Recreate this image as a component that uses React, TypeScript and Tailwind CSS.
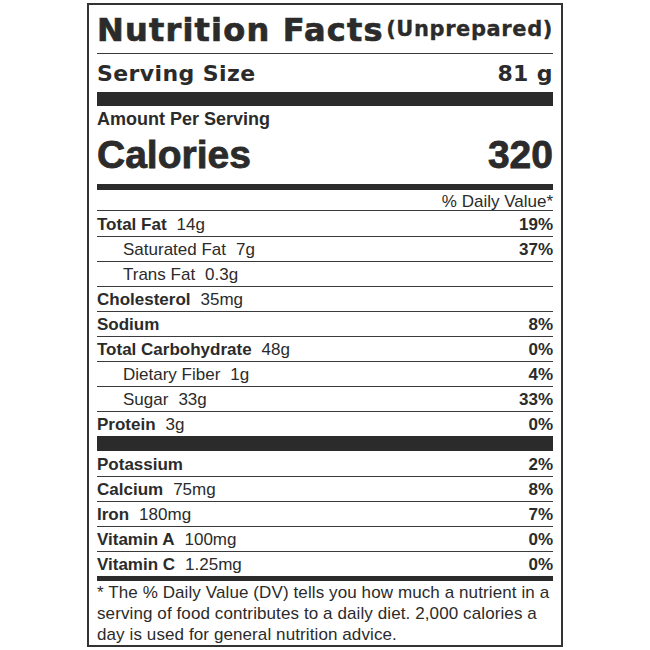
import React from 'react';

type Row = {
  label: string;
  amount?: string;
  dv?: string;
  indent?: boolean;
  bold?: boolean;
};

const main: Row[] = [
  { label: 'Total Fat', amount: '14g', dv: '19%', bold: true },
  { label: 'Saturated Fat', amount: '7g', dv: '37%', indent: true },
  { label: 'Trans Fat', amount: '0.3g', indent: true },
  { label: 'Cholesterol', amount: '35mg', bold: true },
  { label: 'Sodium', dv: '8%', bold: true },
  { label: 'Total Carbohydrate', amount: '48g', dv: '0%', bold: true },
  { label: 'Dietary Fiber', amount: '1g', dv: '4%', indent: true },
  { label: 'Sugar', amount: '33g', dv: '33%', indent: true },
  { label: 'Protein', amount: '3g', dv: '0%', bold: true },
];

const minerals: Row[] = [
  { label: 'Potassium', dv: '2%', bold: true },
  { label: 'Calcium', amount: '75mg', dv: '8%', bold: true },
  { label: 'Iron', amount: '180mg', dv: '7%', bold: true },
  { label: 'Vitamin A', amount: '100mg', dv: '0%', bold: true },
  { label: 'Vitamin C', amount: '1.25mg', dv: '0%', bold: true },
];

const NutrientRow: React.FC<{ row: Row; first?: boolean }> = ({ row, first }) => (
  <div
    className={`flex h-[25px] items-center justify-between pt-[2px] text-[17px] ${
      first ? '' : 'border-t border-[#3a3a3a]'
    }`}
  >
    <div className={`flex items-baseline ${row.indent ? 'pl-[26px]' : ''}`}>
      <span className={row.bold ? 'font-bold' : ''}>{row.label}</span>
      {row.amount && <span className="ml-[10px]">{row.amount}</span>}
    </div>
    {row.dv && <span className="font-bold">{row.dv}</span>}
  </div>
);

export default function App() {
  return (
    <div className="h-[650px] w-[650px] bg-white pl-[87px] pt-[3px] font-['Liberation_Sans',Arial,sans-serif] text-[#2b2b2b]">
      <div className="w-[476px] border-2 border-[#333] px-[8px]">
        {/* header */}
        <div className="flex h-[49px] items-center justify-between border-b border-[#3a3a3a] pt-[2px]">
          <span className="font-['DejaVu_Sans',sans-serif] text-[32px] font-bold tracking-[1.2px] [-webkit-text-stroke:0.7px_#2b2b2b]">
            Nutrition Facts
          </span>
          <span className="font-['DejaVu_Sans',sans-serif] text-[21px] font-bold tracking-[0.6px] [-webkit-text-stroke:0.3px_#2b2b2b]">
            (Unprepared)
          </span>
        </div>

        <div className="flex h-[38px] items-center justify-between font-['DejaVu_Sans',sans-serif] text-[22px] font-bold tracking-[0.4px]">
          <span>Serving Size</span>
          <span>81 g</span>
        </div>
        <div className="h-[14px] bg-[#2b2b2b]" />

        <div className="flex h-[25px] items-center pt-[2px] text-[18px] font-bold">Amount Per Serving</div>
        <div className="flex h-[53px] items-center justify-between pb-[4px] text-[39px] font-bold [-webkit-text-stroke:0.8px_#2b2b2b]">
          <span>Calories</span>
          <span>320</span>
        </div>
        <div className="h-[6px] bg-[#2b2b2b]" />

        <div className="flex h-[20px] items-end justify-end text-[17px] leading-none">% Daily Value*</div>
        <div className="border-t border-[#3a3a3a]">
          {main.map((r, i) => (
            <NutrientRow key={r.label} row={r} first={i === 0} />
          ))}
        </div>
        <div className="h-[15px] bg-[#2b2b2b]" />
        <div>
          {minerals.map((r, i) => (
            <NutrientRow key={r.label} row={r} first={i === 0} />
          ))}
        </div>
        <div className="h-[5px] bg-[#2b2b2b]" />

        <p className="pt-[1px] text-[17px] leading-[21px] tracking-[0.1px]">
          * The % Daily Value (DV) tells you how much a nutrient in a
          <br />
          serving of food contributes to a daily diet. 2,000 calories a
          <br />
          day is used for general nutrition advice.
        </p>
      </div>
    </div>
  );
}
